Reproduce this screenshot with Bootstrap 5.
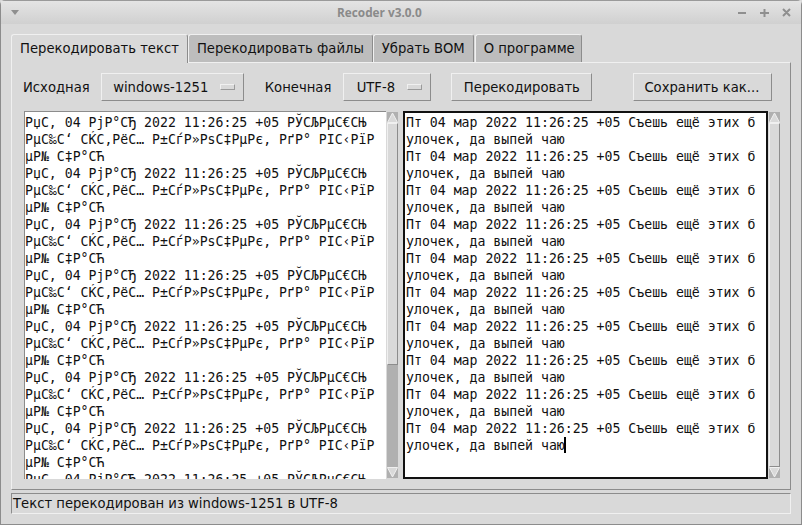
<!DOCTYPE html>
<html lang="ru">
<head>
    <meta charset="UTF-8">
    <title>Recoder v3.0.0</title>
    <link rel="stylesheet" href="https://cdn.jsdelivr.net/npm/bootstrap@5.3.2/dist/css/bootstrap.min.css">
    <style>
        html, body { height: 100%; overflow: hidden; background: #d9d9d9; }
        body { font-family: "DejaVu Sans", sans-serif; font-size: 13.2px; color: #111; line-height: 17px; }
        .app-window { width: 802px; height: 525px; background: #d9d9d9; border: 1px solid #8c8c8c; border-top-color: #9a9a9a; border-radius: 5px 5px 0 0; }
        .title-bar { height: 23px; flex: none; padding: 0 10px; background: linear-gradient(#e4e4e4, #d0d0d0); }
        .title-text { margin-left: 318px; font-family: "Open Sans", sans-serif; font-weight: 700; font-size: 11.8px; color: #8a8a8a; }
        .main-area { padding: 10px 10px 0 10px; }
        .tab-row { height: 28px; }
        .tab-item { height: 28px; padding: 5px 8px 0 8px; background: #bdbdbd; border: 1px solid #f0f0f0; border-bottom: 0; border-right-color: #8c8c8c; border-radius: 3px 3px 0 0; white-space: nowrap; }
        .tab-item.is-active { height: 29px; background: #d9d9d9; position: relative; z-index: 1; }
        .tab-item.last-tab { margin-left: 1px; padding-right: 6px; }
        .tab-panel { width: 780px; height: 428px; border: 1px solid #f0f0f0; border-right-color: #8c8c8c; border-bottom-color: #8c8c8c; padding: 10px 8px 0 12px; }
        .tool-row { height: 28px; margin: 0 0 10px -1px; }
        .raised-btn { height: 28px; padding: 0; background: #d9d9d9; border: 1px solid #8c8c8c; border-top-color: #f0f0f0; border-left-color: #f0f0f0; color: #111; font-size: 13.2px; }
        .combo-src { width: 143px; margin: 0 21px 0 11px; }
        .combo-dst { width: 88px; margin: 0 20px 0 12px; }
        .recode-btn { width: 141px; }
        .save-btn { width: 139px; margin-left: 41px; padding-right: 2px; }
        .combo-mark { width: 15px; height: 6px; flex: none; background: #d9d9d9; border: 1px solid #9a9a9a; border-top-color: #f0f0f0; border-left-color: #f0f0f0; }
        .combo-label { flex: 1; text-align: center; }
        .text-pane { height: 368px; flex: none; background: #fff; font-family: "DejaVu Sans Mono", monospace; font-size: 13.2px; line-height: 17px; color: #111; white-space: pre; overflow: hidden; }
        .pane-left { width: 362px; padding: 2px 0 0 0; border-left: 1px solid #8c8c8c; border-top: 1px solid #8c8c8c; }
        .pane-right { width: 365px; margin-left: 4px; padding: 1px 0 0 1px; border: 2px solid #111; }
        .scroll-track { width: 13px; height: 368px; flex: none; background: #b0b0b0; border: 1px solid #d9d9d9; }
        .scroll-thumb { background: #d9d9d9; border: 1px solid #8c8c8c; border-top-color: #f0f0f0; border-left-color: #f0f0f0; }
        .arrow-cell { height: 11px; flex: none; }
        .arrow-cell svg { display: block; }
        .text-caret { display: inline-block; width: 2px; height: 16px; margin-left: -1px; background: #000; vertical-align: -3px; }
        .status-bar { width: 780px; height: 21px; margin-top: 3px; padding-left: 1px; line-height: 20px; border: 1px solid #f0f0f0; border-top-color: #8c8c8c; border-left-color: #8c8c8c; white-space: nowrap; }
    </style>
</head>
<body>

    <div class="app-window d-flex flex-column">
        <div class="title-bar d-flex align-items-center">
            <svg width="8" height="5" viewBox="0 0 8 5"><path d="M0 0h8L4 5z" fill="#8f8f8f"/></svg>
            <span class="title-text">Recoder v3.0.0</span>
            <svg class="ms-auto" width="54" height="10" viewBox="0 0 54 10" fill="none" stroke="#8f8f8f" stroke-width="2"><path d="M1 5h8M23 5h9M27.5 1v8M46 1l7 7M53 1l-7 7"/></svg>
        </div>

        <div class="main-area">
            <div class="tab-row d-flex">
                <div class="tab-item is-active">Перекодировать текст</div>
                <div class="tab-item">Перекодировать файлы</div>
                <div class="tab-item">Убрать BOM</div>
                <div class="tab-item last-tab">О программе</div>
            </div>

            <div class="tab-panel">
                <div class="tool-row d-flex align-items-center">
                    <span>Исходная</span>
                    <div class="raised-btn combo-src d-flex align-items-center pe-2">
                        <span class="combo-label">windows-1251</span>
                        <span class="combo-mark"></span>
                    </div>
                    <span>Конечная</span>
                    <div class="raised-btn combo-dst d-flex align-items-center pe-2">
                        <span class="combo-label">UTF-8</span>
                        <span class="combo-mark"></span>
                    </div>
                    <button type="button" class="raised-btn recode-btn">Перекодировать</button>
                    <button type="button" class="raised-btn save-btn">Сохранить как...</button>
                </div>

                <div class="d-flex">
                    <div class="text-pane pane-left" id="srcText"></div>
                    <div class="scroll-track d-flex flex-column">
                        <div class="arrow-cell"><svg width="11" height="11" viewBox="0 0 11 11"><path d="M5.5 1L10.5 10.5H.5z" fill="#d9d9d9" stroke="#f0f0f0"/></svg></div>
                        <div class="scroll-thumb" style="height: 242px"></div>
                        <div class="flex-grow-1"></div>
                        <div class="arrow-cell"><svg width="11" height="11" viewBox="0 0 11 11"><path d="M5.5 10L10.5 .5H.5z" fill="#d9d9d9" stroke="#f0f0f0"/></svg></div>
                    </div>
                    <div class="text-pane pane-right" id="dstText"></div>
                    <div class="scroll-track d-flex flex-column">
                        <div class="arrow-cell"><svg width="11" height="11" viewBox="0 0 11 11"><path d="M5.5 1L10.5 10.5H.5z" fill="#d9d9d9" stroke="#f0f0f0"/></svg></div>
                        <div class="scroll-thumb flex-grow-1"></div>
                        <div class="arrow-cell"><svg width="11" height="11" viewBox="0 0 11 11"><path d="M5.5 10L10.5 .5H.5z" fill="#d9d9d9" stroke="#f0f0f0"/></svg></div>
                    </div>
                </div>
            </div>

            <div class="status-bar">Текст перекодирован из windows-1251 в UTF-8</div>
        </div>
    </div>

    <script>
        // both panes just repeat the same log line
        let bad = "РџС‚ 04 РјР°СЂ 2022 11:26:25 +05 РЎСЉРµС€СЊ\nРµС‰С‘ СЌС‚РёС… Р±СѓР»РѕС‡РµРє, РґР° РІС‹РїР\nµР№ С‡Р°СЋ\n";
        let good = "Пт 04 мар 2022 11:26:25 +05 Съешь ещё этих б\nулочек, да выпей чаю\n";
        document.getElementById("srcText").textContent = bad.repeat(8);
        document.getElementById("dstText").innerHTML = good.repeat(10).trimEnd() + '<span class="text-caret"></span>';
    </script>

</body>
</html>
